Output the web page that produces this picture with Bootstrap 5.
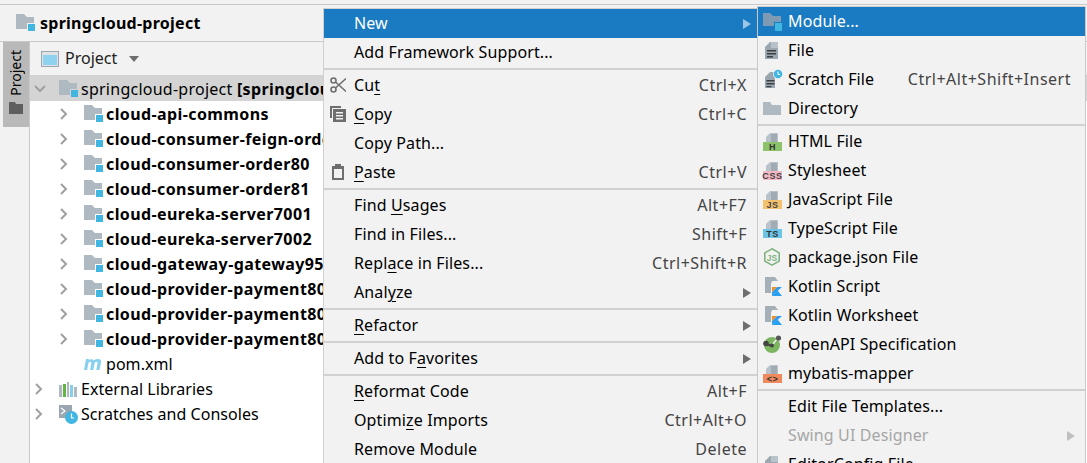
<!DOCTYPE html>
<html lang="en"><head><meta charset="utf-8"><title>IDE</title>
<link href="https://cdn.jsdelivr.net/npm/bootstrap@5.3.0/dist/css/bootstrap.min.css" rel="stylesheet">
<style>
html,body{height:463px;overflow:hidden}
body{font-family:"Noto Sans","Open Sans",sans-serif;font-size:16px;color:#000;background:#fff;position:relative;line-height:25px}
.topline{height:5px;background:#f2f2f2;border-bottom:1px solid #c9c9c9}
.crumb{height:37px;background:#f2f2f2;border-bottom:1px solid #c9c9c9;padding-left:16px;font-weight:700;gap:5px;letter-spacing:.26px}
.crumb svg{flex:none}
.ide{height:421px}
.strip{width:30px;background:#f2f2f2;border-right:1px solid #c9c9c9;padding-left:3px;flex:none}
.vtab{width:26px;height:85px;background:#b9b9b9;padding-top:8px;gap:6px}
.vtab span{writing-mode:vertical-rl;transform:rotate(180deg);font-size:14px;line-height:20px}
.tree{flex:1 1 auto;min-width:0}
.phead{height:34px;background:#f2f2f2;border-bottom:1px solid #d1d1d1;padding-left:11px;gap:6px;color:#222}
.caret{width:0;height:0;border:5px solid transparent;border-top:6px solid #6e6e6e;border-bottom:0;margin-left:6px}
.trow{height:25px;white-space:nowrap;overflow:hidden;padding-top:1px;letter-spacing:.05px}
.trow.on{background:#d4d4d4;letter-spacing:.25px}
.ind1{padding-left:2px}.ind2{padding-left:27px}
.arrow{width:27px;flex:none}
.trow svg{display:block}
.arrow svg{margin-left:3px}
.arrow svg.dn{margin-left:2px}
.trow b{letter-spacing:.4px}
.ico{flex:none;margin-right:3px;overflow:visible}
.cmenu{position:absolute;background:#f2f2f2;white-space:nowrap;letter-spacing:.12px}
.m1{left:323px;top:8px;width:434px;border-left:1px solid #d0d0d0;border-top:1px solid #d0d0d0}
.m2{left:757px;top:6px;width:329px;border-left:1px solid #c9c9c9;border-right:1px solid #c9c9c9;border-top:1px solid #d0d0d0}
.mi{height:29px;padding:0 10px 0 30px;justify-content:space-between;position:relative;color:#000}
.m2 .mi{padding-left:30px;padding-right:14px}
.mi.act{background:#1a7bc2;color:#fff}
.mi.dis{color:#a6a6a6}
.msep{height:4px;padding-top:1px}
.msep::before{content:"";display:block;height:2px;background:#d1d1d1}
.sc{color:#444;letter-spacing:.5px}
.tri{width:0;height:0;border:5px solid transparent;border-left:8px solid #6e6e6e;border-right:0;flex:none;margin-right:-4px}
.act .tri{border-left-color:#9cc6e6}
.dis .tri{border-left-color:#c0c0c0}
.mi svg{position:absolute;left:6px;top:6px}
.m2 .mi svg{left:5px;top:5px;overflow:visible}
.mi u{text-underline-offset:3px}
</style></head><body>
<div class="topline"></div>
<div class="crumb d-flex align-items-center">
<svg width="19" height="18" viewBox="0 0 19 18"><path d="M0 0h8l3 3h7v12H0z" fill="#afb9c1"/><path d="M11 9h8v9h-8z" fill="#f2f2f2"/><path d="M12 10h7v7h-7z" fill="#40b6e0"/></svg><span>springcloud-project</span></div>
<div class="ide d-flex">
<div class="strip"><div class="vtab d-flex flex-column align-items-center"><span>Project</span><svg width="14" height="12" viewBox="0 0 14 12"><path d="M0 0h6l1 2h7v10H0z" fill="#5f5f5f"/></svg></div></div>
<div class="tree">
<div class="phead d-flex align-items-center"><svg width="18" height="18" viewBox="0 0 18 18"><path d="M0 1h18v16H0z" fill="#9aa7b0"/><path d="M1 2h16v14H1z" fill="#dfe3e6"/><path d="M2 5h14v10H2z" fill="#8fd2ef"/></svg><span>Project</span><i class="caret"></i></div>
<div id="t"></div>
</div></div>
<div class="cmenu m1" id="m1"></div>
<div class="cmenu m2" id="m2"></div>
<script>
const A=d=>d?'<svg width="8" height="12" viewBox="0 0 8 12"><path d="M1 1l5 5-5 5" fill="none" stroke="#a0a0a0" stroke-width="2"/></svg>':'';
const D='<svg class="dn" width="12" height="8" viewBox="0 0 12 8"><path d="M1 1l5 5 5-5" fill="none" stroke="#a0a0a0" stroke-width="2"/></svg>';
const F=(bg)=>`<svg class="ico" width="19" height="18" viewBox="0 0 19 18"><path d="M0 0h8l3 3h7v12H0z" fill="#afb9c1"/><path d="M11 9h8v9h-8z" fill="${bg}"/><path d="M12 10h7v7h-7z" fill="#40b6e0"/></svg>`;
const mods=['cloud-api-commons','cloud-consumer-feign-order80','cloud-consumer-order80','cloud-consumer-order81','cloud-eureka-server7001','cloud-eureka-server7002','cloud-gateway-gateway9527','cloud-provider-payment8001','cloud-provider-payment8002','cloud-provider-payment8003'];
let h='<div class="trow on ind1 d-flex align-items-center"><span class="arrow">'+D+'</span>'+F('#d4d4d4')+'<span>springcloud-project <b>[springcloud]</b></span></div>';
for(const m of mods)h+='<div class="trow ind2 d-flex align-items-center"><span class="arrow">'+A(1)+'</span>'+F('#fff')+'<b>'+m+'</b></div>';
h+='<div class="trow ind2 d-flex align-items-center"><span class="arrow"></span><svg class="ico" width="19" height="14" viewBox="0 0 19 14"><path d="M0 13L2 2h3l-.3 1.500C6 2 8.500 1.500 9.500 3.500 11 2 15 1 16.500 3c.8 1 .5 2.500.3 3.500L15.500 13h-3.200l1.200-6.500c.2-1.200-.2-1.800-1-1.800-1 0-1.800.8-2 2L9.300 13H6.100l1.200-6.500c.2-1.200-.2-1.800-1-1.800-1 0-1.800.8-2 2L3.100 13z" fill="#87d0f0"/></svg><span>pom.xml</span></div>';
h+='<div class="trow ind1 d-flex align-items-center"><span class="arrow">'+A(1)+'</span><svg class="ico" width="19" height="15" viewBox="0 0 19 15"><path d="M0 3h3v12H0z" fill="#afb9c1"/><path d="M4 2h3v13H4z" fill="#62b543"/><path d="M8 0h2v15H8z" fill="#afb9c1"/><path d="M11 3h3v12h-3z" fill="#87cdec"/><path d="M15 5h3v10h-3z" fill="#afb9c1"/></svg><span>External Libraries</span></div>';
h+='<div class="trow ind1 d-flex align-items-center"><span class="arrow">'+A(1)+'</span><svg class="ico" width="19" height="19" viewBox="0 0 19 19"><path d="M0 0h13v13H0z" fill="#9aa7b0"/><path d="M2 3l4 3-4 3" fill="none" stroke="#fff" stroke-width="1.200"/><circle cx="12.500" cy="12.500" r="6.500" fill="#40b6e0"/><path d="M12.500 8.500v4.500h2.500" fill="none" stroke="#fff" stroke-width="1.200"/></svg><span>Scratches and Consoles</span></div>';
t.innerHTML=h;
const ic={
cut:'<svg width="16" height="16" viewBox="0 0 16 16" fill="none" stroke="#6e6e6e" stroke-width="1.600"><circle cx="3.500" cy="3.500" r="2.500"/><circle cx="3.500" cy="12.500" r="2.500"/><path d="M5.500 5L16 14.500M5.500 11L16 1.500"/></svg>',
copy:'<svg width="16" height="16" viewBox="0 0 16 16"><path d="M0 0h11v2H2v10H0z" fill="#6e6e6e"/><path d="M3 3h13v13H3z" fill="#6e6e6e"/><path d="M6 6h7v1.500H6zM6 9h7v1.500H6zM6 12h7v1.500H6z" fill="#f2f2f2"/></svg>',
paste:'<svg width="16" height="16" viewBox="0 0 16 16"><path d="M2 2h12v14H2z" fill="#6e6e6e"/><path d="M4 5h8v9H4z" fill="#f2f2f2"/><path d="M5 0h6v4H5z" fill="#6e6e6e"/></svg>',
mod:'<svg width="20" height="20" viewBox="0 0 20 20"><path d="M0 1h7l3 3h8v10H0z" fill="#7f9bb3"/><path d="M11 10h9v10h-9z" fill="#1a7bc2"/><path d="M12 11h7v8h-7z" fill="#40b6e0"/></svg>',
file:'<svg width="20" height="20" viewBox="0 0 20 20"><path d="M2 6l5-5h8v17H2z" fill="#9aa7b0"/><path d="M8 1h7v6H8z" fill="#b9c2c9"/><path d="M4 9h9v1.500H4zM4 12h9v1.500H4zM4 15h6v1.500H4z" fill="#3c3f41"/></svg>',
scr:'<svg width="20" height="20" viewBox="0 0 20 20"><path d="M2 7l5-5h5v16H2z" fill="#9aa7b0"/><path d="M3.500 10h8v1.500h-8zM3.500 13h8v1.500h-8zM3.500 16h5v1.200h-5z" fill="#3c3f41"/><circle cx="15" cy="4" r="5" fill="#f2f2f2"/><circle cx="15" cy="4" r="4.300" fill="#40b6e0"/><path d="M15 1.500V4.500h2" fill="none" stroke="#fff"/></svg>',
dir:'<svg width="20" height="20" viewBox="0 0 20 20"><path d="M0 3h7l2 3h9v10H0z" fill="#afb9c1"/></svg>',
bad:(c,t,tc)=>`<svg width="20" height="20" viewBox="0 0 20 20"><path d="M3 5l4-4h8v9H3z" fill="#b9c2c9"/><path d="M8 2h6v8H8z" fill="#a0abb4"/><path d="M0 10h19v9H0z" fill="${c}"/><text x="9.500" y="18" text-anchor="middle" font-family="Liberation Sans" font-size="9" font-weight="700" letter-spacing=".6" fill="${tc}">${t}</text></svg>`,
node:'<svg width="20" height="20" viewBox="0 0 20 20"><path d="M9 .8l7.200 4.100v8.200L9 17.200 1.800 13.100V4.900z" fill="none" stroke="#7fb27f" stroke-width="1.600"/><text x="9" y="12.500" text-anchor="middle" font-family="Liberation Sans" font-size="8.500" font-weight="700" fill="#7fb27f">JS</text></svg>',
kt:'<svg width="20" height="20" viewBox="0 0 20 20"><path d="M2 0h10l3 4H9l-1 3v9H2z" fill="#a5afb8"/><path d="M9 19l5.500-5.500L19 19z" fill="#27a0f0"/><path d="M14 10h5l-10 9v-4z" fill="#2e9cf0"/><path d="M9 15l5-5H9z" fill="#f28c28"/></svg>',
oa:'<svg width="20" height="20" viewBox="0 0 20 20"><circle cx="9" cy="10" r="8" fill="#7cb55f"/><path d="M3 9l6 2" stroke="#444" stroke-width="2"/><circle cx="3" cy="8.500" r="2.800" fill="#444"/><path d="M9 10l6-7" stroke="#f2f2f2" stroke-width="1.500"/><circle cx="15.500" cy="3" r="2.600" fill="#555"/><circle cx="9" cy="10.500" r="2" fill="#444"/></svg>'
};
const M=(el,arr)=>{el.innerHTML=arr.map(x=>{if(x==='-')return '<div class="msep"></div>';
const [txt,sc,cl,icon]=x;return `<div class="mi d-flex align-items-center ${cl||''}">${icon||''}<span>${txt}</span>${sc==='>'?'<i class="tri"></i>':sc?`<span class="sc">${sc}</span>`:''}</div>`}).join('')};
M(m1,[['New','>','act'],['Add Framework Support...'],'-',['Cu<u>t</u>','Ctrl+X','',ic.cut],['<u>C</u>opy','Ctrl+C','',ic.copy],['Copy Path...'],['<u>P</u>aste','Ctrl+V','',ic.paste],'-',['Find <u>U</u>sages','Alt+F7'],['Find in Files...','Shift+F'],['Repl<u>a</u>ce in Files...','Ctrl+Shift+R'],['Anal<u>y</u>ze','>'],'-',['<u>R</u>efactor','>'],'-',['Add to F<u>a</u>vorites','>'],'-',['<u>R</u>eformat Code','Alt+F'],['Optimi<u>z</u>e Imports','Ctrl+Alt+O'],['Remove Module','Delete']]);
M(m2,[['Module...','','act',ic.mod],['File','','',ic.file],['Scratch File','Ctrl+Alt+Shift+Insert','',ic.scr],['Directory','','',ic.dir],'-',['HTML File','','',ic.bad('#8cc26a','H','#333')],['Stylesheet','','',ic.bad('#f4b8c4','CSS','#444')],['JavaScript File','','',ic.bad('#f4c26e','JS','#444')],['TypeScript File','','',ic.bad('#6cc4e8','TS','#333')],['package.json File','','',ic.node],['Kotlin Script','','',ic.kt],['Kotlin Worksheet','','',ic.kt],['OpenAPI Specification','','',ic.oa],['mybatis-mapper','','',ic.bad('#f08a5d','&lt;&gt;','#333')],'-',['Edit File Templates...'],['Swing UI Designer','>','dis'],['EditorConfig File','','',ic.file]]);
</script>
<script src="https://cdn.jsdelivr.net/npm/bootstrap@5.3.0/dist/js/bootstrap.bundle.min.js"></script>
</body></html>
